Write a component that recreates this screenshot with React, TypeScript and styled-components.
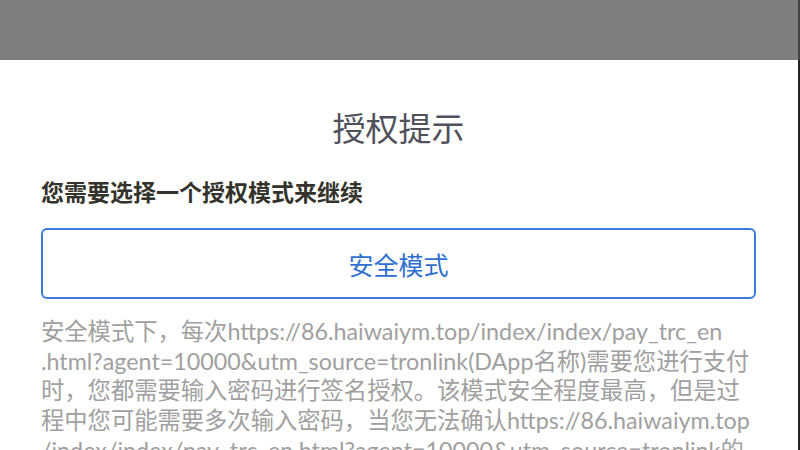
import styled, { createGlobalStyle } from 'styled-components';

const GlobalStyle = createGlobalStyle`
  html, body {
    margin: 0;
    padding: 0;
    background: #7f7f7f;
    font-family: Lato, "Noto Sans CJK SC", sans-serif;
  }
`;

const Page = styled.div`
  width: 800px;
  height: 450px;
  display: flex;
  flex-direction: column;
  overflow: hidden;
`;

const Backdrop = styled.div`
  height: 60px;
  flex-shrink: 0;
  background: #7f7f7f;
  border-right: 2px solid #444;
  box-sizing: border-box;
`;

const Sheet = styled.div`
  flex: 1;
  background: #fff;
  padding: 46px 42px 0 41px;
  border-right: 2px solid #222;
  box-sizing: border-box;
  display: flex;
  flex-direction: column;
`;

const Title = styled.h1`
  margin: 0;
  font-size: 33px;
  line-height: 44px;
  font-weight: 400;
  color: #51515b;
  text-align: center;
`;

const Subtitle = styled.p`
  margin: 26px 0 0 0;
  font-size: 23px;
  line-height: 32px;
  font-weight: 700;
  color: #33332b;
`;

const ModeButton = styled.button`
  margin-top: 20px;
  height: 71px;
  width: 100%;
  border: 2px solid #3e7bd8;
  border-radius: 6px;
  background: #fff;
  color: #2f6fd1;
  font-family: inherit;
  font-size: 25px;
  cursor: pointer;
`;

const Description = styled.p`
  margin: 18px 0 0 0;
  font-size: 23.3px;
  line-height: 29.7px;
  color: #a0a0a0;
  overflow-wrap: anywhere;
`;

// the link breaks before each "/" and "." like the app's text view does
const link = 'https://86.haiwaiym.top/index/index/pay_trc_en.html?agent=10000&utm_source=tronlink'
  .replace(/([./])/g, '\u200b$1');

export default function App() {
  return (
    <>
      <GlobalStyle />
      <Page>
        <Backdrop />
        <Sheet>
          <Title>授权提示</Title>
          <Subtitle>您需要选择一个授权模式来继续</Subtitle>
          <ModeButton>安全模式</ModeButton>
          <Description>
            安全模式下，每次{link}(DApp名称)需要您进行支付时，您都需要输入密码进行签名授权。该模式安全程度最高，但是过程中您可能需要多次输入密码，当您无法确认{link}的安全性时，建议使用安全模式。
          </Description>
        </Sheet>
      </Page>
    </>
  );
}
